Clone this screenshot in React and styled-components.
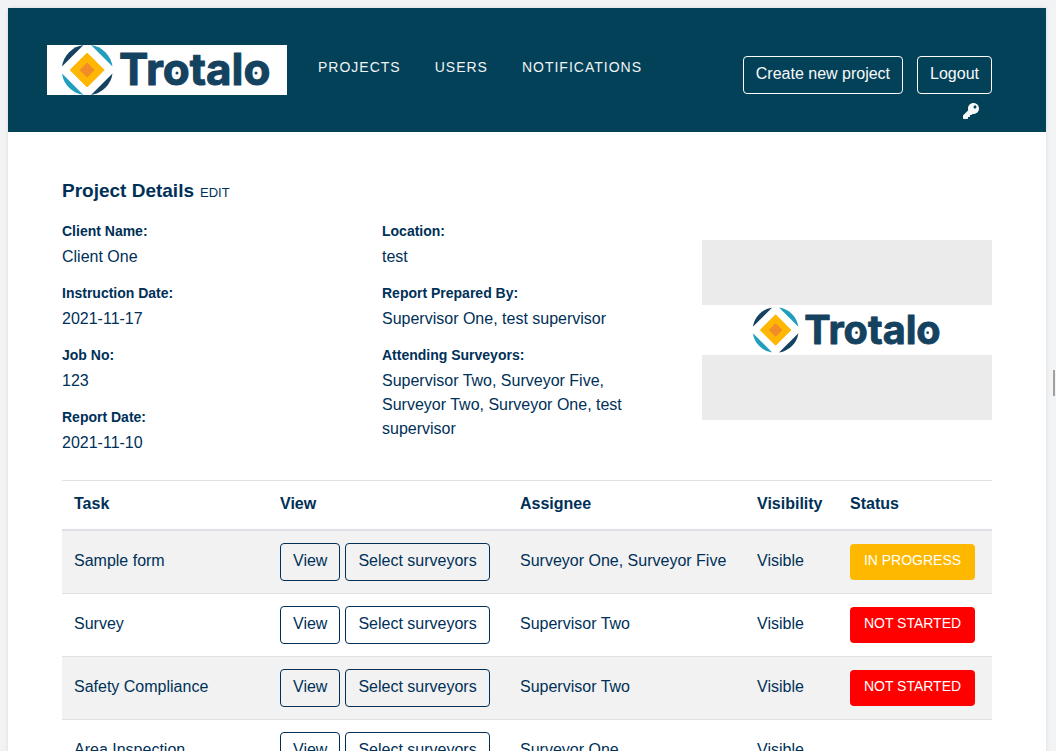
import React from "react";
import styled, { createGlobalStyle } from "styled-components";
import { FaKey } from "react-icons/fa";

const navy = "#003057";
const teal = "#034159";

const GlobalStyle = createGlobalStyle`
  *, *::before, *::after { box-sizing: border-box; }
  body {
    margin: 0;
    background: #f1f3f4;
    color: ${navy};
    font-family: "Liberation Sans", Arial, sans-serif;
    font-size: 16px;
    line-height: 24px;
  }
`;

const Viewport = styled.div`
  height: 100vh;
  padding: 8px 10px 0 8px;
  overflow: hidden;
`;

const Panel = styled.div`
  min-height: 100%;
  background: #fff;
  box-shadow: 0 0 4px rgba(0, 0, 0, 0.1);
`;

const ScrollThumb = styled.div`
  position: fixed;
  top: 370px;
  right: 1px;
  width: 2px;
  height: 26px;
  background: #a0a0a0;
`;

const Header = styled.header`
  display: flex;
  align-items: flex-start;
  padding: 37px 54px 13px 39px;
  background: ${teal};
`;

const Brand = styled.a`
  display: flex;
  justify-content: center;
  width: 240px;
  background: #fff;
`;

const Nav = styled.nav`
  display: flex;
  gap: 34px;
  padding: 10px 0 0 31px;
`;

const NavLink = styled.a`
  color: #f1f3f4;
  font-size: 14px;
  letter-spacing: 1px;
  text-decoration: none;
`;

const Actions = styled.div`
  display: flex;
  flex-direction: column;
  align-items: flex-end;
  gap: 9px;
  margin-left: auto;
  padding-top: 11px;
`;

const ButtonRow = styled.div`
  display: flex;
  gap: ${(p) => p.$gap}px;
`;

const Button = styled.button`
  padding: 5px 12px 7px;
  border: 1px solid ${(p) => (p.$light ? "#fff" : navy)};
  border-radius: 4px;
  background: transparent;
  color: ${(p) => (p.$light ? "#f8f9fa" : navy)};
  font: inherit;
  white-space: nowrap;
`;

const KeyButton = styled.button`
  display: flex;
  padding: 0 13px 0 0;
  border: 0;
  background: transparent;
  color: #f8f9fa;
  font-size: 16px;
`;

const Main = styled.main`
  padding: 46px 54px 0;
`;

const TitleRow = styled.div`
  display: flex;
  align-items: baseline;
  gap: 6px;
`;

const Title = styled.h1`
  margin: 0;
  font-size: 19px;
  line-height: 26px;
`;

const EditLink = styled.a`
  color: ${navy};
  font-size: 13px;
  text-decoration: none;
`;

const Details = styled.section`
  display: grid;
  grid-template-columns: repeat(3, 1fr);
  gap: 30px;
  padding: 14px 0 25px;
`;

const Fields = styled.dl`
  display: flex;
  flex-direction: column;
  gap: 12px;
  margin: 0;
  padding-right: 30px;
`;

const Label = styled.dt`
  margin-bottom: 2px;
  font-size: 14px;
  font-weight: 700;
`;

const Value = styled.dd`
  margin: 0;
`;

const ProjectImage = styled.div`
  align-self: start;
  margin-top: 21px;
  padding: 65px 0;
  background: #ebebeb;
`;

const ImageBand = styled.div`
  display: flex;
  justify-content: center;
  padding: 2px 0;
  background: #fff;
`;

const Table = styled.table`
  width: 100%;
  border-collapse: separate;
  border-spacing: 0;
  table-layout: fixed;
`;

const Column = styled.col`
  width: ${(p) => (p.$width ? `${p.$width}px` : "auto")};
`;

const HeadCell = styled.th`
  padding: 11px 12px 13px;
  border-top: 1px solid #dee2e6;
  border-bottom: 2px solid #dee2e6;
  text-align: left;
`;

const Cell = styled.td`
  height: 63px;
  padding: 0 12px;
  border-bottom: 1px solid #dee2e6;
  vertical-align: middle;
  white-space: nowrap;
`;

const TextCell = styled(Cell)`
  padding-bottom: 2px;
`;

const Row = styled.tr`
  &:nth-child(odd) {
    background: #f2f2f2;
  }
`;

const Status = styled.button`
  display: block;
  width: 125px;
  padding: 4px 0 8px;
  border: 0;
  border-radius: 4px;
  background: ${(p) => (p.$started ? "#ffb800" : "#ff0000")};
  color: #fff;
  font: inherit;
  font-size: 14px;
`;

const LogoDrawing = styled.svg`
  display: block;
  overflow: visible;
`;

function Logo({ width, height }) {
  return (
    <LogoDrawing width={width} height={height} viewBox="0 0 212 50" role="img" aria-label="Trotalo">
      <path d="M1 21.5A25.2 25.2 0 0 1 22.5 0Z" fill="#14425f" />
      <path d="M51.5 21.5A25.2 25.2 0 0 0 30 0Z" fill="#219ebc" />
      <path d="M1 28.5A25.2 25.2 0 0 0 22.5 50Z" fill="#219ebc" />
      <path d="M51.5 28.5A25.2 25.2 0 0 1 30 50Z" fill="#14425f" />
      <path d="M26.2 8L43.2 25L26.2 42L9.2 25Z" fill="#ffb703" stroke="#ffb703" strokeLinejoin="round" />
      <path d="M26.2 18L33.2 25L26.2 32L19.2 25Z" fill="#f28c28" stroke="#f28c28" strokeLinejoin="round" />
      <text
        x="58"
        y="40"
        fill="#14425f"
        stroke="#14425f"
        strokeWidth="1"
        strokeLinejoin="round"
        fontFamily="Inter, sans-serif"
        fontWeight="700"
        fontSize="44"
      >
        Trotalo
      </text>
      <circle cx="116" cy="28" r="1.5" fill="#14425f" />
      <circle cx="195" cy="28" r="1.5" fill="#14425f" />
    </LogoDrawing>
  );
}

const navItems = ["PROJECTS", "USERS", "NOTIFICATIONS"];

const fieldColumns = [
  [
    ["Client Name:", "Client One"],
    ["Instruction Date:", "2021-11-17"],
    ["Job No:", "123"],
    ["Report Date:", "2021-11-10"],
  ],
  [
    ["Location:", "test"],
    ["Report Prepared By:", "Supervisor One, test supervisor"],
    [
      "Attending Surveyors:",
      "Supervisor Two, Surveyor Five, Surveyor Two, Surveyor One, test supervisor",
    ],
  ],
];

const tasks = [
  { name: "Sample form", assignee: "Surveyor One, Surveyor Five", status: "IN PROGRESS" },
  { name: "Survey", assignee: "Supervisor Two", status: "NOT STARTED" },
  { name: "Safety Compliance", assignee: "Supervisor Two", status: "NOT STARTED" },
  { name: "Area Inspection", assignee: "Surveyor One" },
];

export default function App() {
  return (
    <>
      <GlobalStyle />
      <Viewport>
        <Panel>
          <Header>
            <Brand href="#">
              <Logo width={212} height={50} />
            </Brand>
            <Nav>
              {navItems.map((item) => (
                <NavLink href="#" key={item}>{item}</NavLink>
              ))}
            </Nav>
            <Actions>
              <ButtonRow $gap={14}>
                <Button $light>Create new project</Button>
                <Button $light>Logout</Button>
              </ButtonRow>
              <KeyButton aria-label="Change password">
                <FaKey />
              </KeyButton>
            </Actions>
          </Header>
          <Main>
            <TitleRow>
              <Title>Project Details</Title>
              <EditLink href="#">EDIT</EditLink>
            </TitleRow>
            <Details>
              {fieldColumns.map((fields) => (
                <Fields key={fields[0][0]}>
                  {fields.map(([label, value]) => (
                    <div key={label}>
                      <Label>{label}</Label>
                      <Value>{value}</Value>
                    </div>
                  ))}
                </Fields>
              ))}
              <ProjectImage>
                <ImageBand>
                  <Logo width={191} height={46} />
                </ImageBand>
              </ProjectImage>
            </Details>
            <Table>
              <colgroup>
                <Column />
                <Column $width={240} />
                <Column $width={237} />
                <Column $width={93} />
                <Column $width={154} />
              </colgroup>
              <thead>
                <tr>
                  {["Task", "View", "Assignee", "Visibility", "Status"].map((h) => (
                    <HeadCell scope="col" key={h}>{h}</HeadCell>
                  ))}
                </tr>
              </thead>
              <tbody>
                {tasks.map((task) => (
                  <Row key={task.name}>
                    <TextCell>{task.name}</TextCell>
                    <Cell>
                      <ButtonRow $gap={5}>
                        <Button>View</Button>
                        <Button>Select surveyors</Button>
                      </ButtonRow>
                    </Cell>
                    <TextCell>{task.assignee}</TextCell>
                    <TextCell>Visible</TextCell>
                    <Cell>
                      {task.status && (
                        <Status $started={task.status === "IN PROGRESS"}>{task.status}</Status>
                      )}
                    </Cell>
                  </Row>
                ))}
              </tbody>
            </Table>
          </Main>
        </Panel>
        <ScrollThumb />
      </Viewport>
    </>
  );
}
